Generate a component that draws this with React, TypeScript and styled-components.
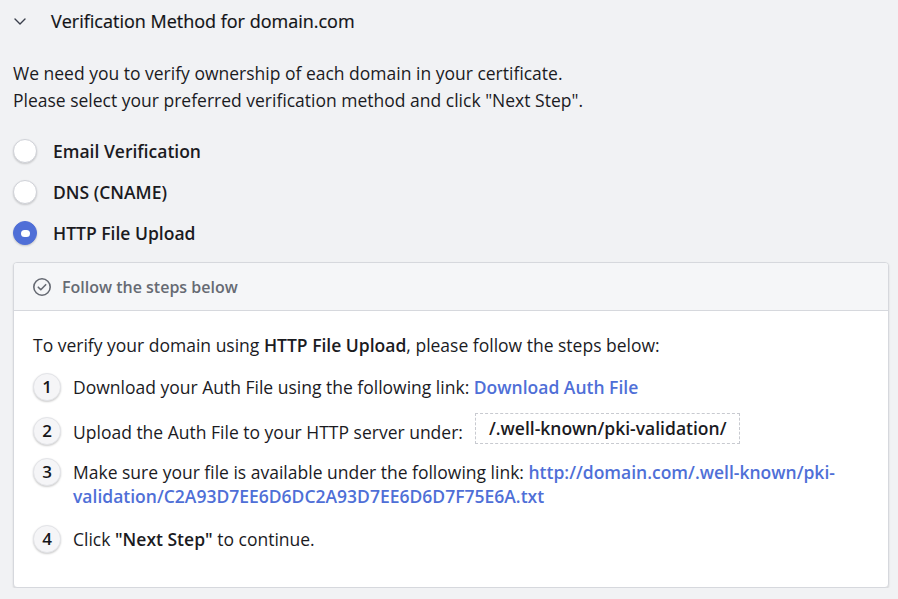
import React, { useState } from 'react';
import styled, { createGlobalStyle } from 'styled-components';

const GlobalStyle = createGlobalStyle`
  html, body {
    margin: 0;
    padding: 0;
    background: #f1f2f4;
  }
  body {
    font-family: 'Open Sans', 'Noto Sans', sans-serif;
    color: #1b1b1f;
  }
`;

const Page = styled.div`
  padding: 0 9px 0 13px;
`;

const Header = styled.div`
  display: flex;
  align-items: center;
  height: 42px;
  gap: 24px;
`;

const Chevron = styled.svg`
  width: 14px;
  height: 14px;
  color: #3a3f4b;
  flex-shrink: 0;
`;

const Title = styled.h2`
  margin: 0;
  font-size: 18px;
  font-weight: 500;
  color: #111216;
  -webkit-text-stroke: 0.2px #111216;
`;

const Intro = styled.p`
  margin: 18px 0 25px;
  font-size: 17.5px;
  line-height: 27px;
`;

const Options = styled.div`
  display: flex;
  flex-direction: column;
  gap: 17px;
  margin-bottom: 17px;
`;

const Option = styled.label`
  display: flex;
  align-items: center;
  gap: 16px;
  font-size: 17.5px;
  font-weight: 600;
  cursor: pointer;
  height: 24px;
`;

const RadioDot = styled.span<{ $checked: boolean }>`
  width: 24px;
  height: 24px;
  border-radius: 50%;
  box-sizing: border-box;
  flex-shrink: 0;
  display: flex;
  align-items: center;
  justify-content: center;
  background: ${({ $checked }) => ($checked ? '#4f6fd7' : '#fff')};
  border: 1px solid ${({ $checked }) => ($checked ? '#4f6fd7' : '#d0d2d8')};
  box-shadow: 0 1px 2px rgba(0, 0, 0, 0.18);

  &::after {
    content: '';
    display: ${({ $checked }) => ($checked ? 'block' : 'none')};
    width: 9px;
    height: 7px;
    border-radius: 4px;
    background: #fff;
  }
`;

const Panel = styled.div`
  background: #fff;
  border: 1px solid #d6d8dd;
  border-radius: 4px;
  box-shadow: 0 1px 2px rgba(0, 0, 0, 0.12);
  overflow: hidden;
`;

const PanelHead = styled.div`
  display: flex;
  align-items: center;
  gap: 10px;
  height: 47px;
  padding: 0 18px;
  background: #f5f6f8;
  border-bottom: 1px solid #d6d8dd;
  font-size: 16px;
  font-weight: 600;
  color: #666a73;
`;

const PanelBody = styled.div`
  padding: 21px 19px 34px;
  font-size: 17.5px;
`;

const Lead = styled.p`
  margin: 0 0 15px;
  line-height: 26px;

  b {
    font-weight: 600;
  }
`;

const Steps = styled.ol`
  list-style: none;
  margin: 0;
  padding: 0;
  display: flex;
  flex-direction: column;
`;

const Step = styled.li<{ $gap: number }>`
  display: flex;
  align-items: flex-start;
  gap: 12px;
  margin-bottom: ${({ $gap }) => $gap}px;
  line-height: 24px;

  b {
    font-weight: 600;
  }
`;

const StepNum = styled.span`
  width: 28px;
  height: 28px;
  border-radius: 50%;
  flex-shrink: 0;
  display: flex;
  align-items: center;
  justify-content: center;
  background: #f5f5f7;
  border: 1px solid #e3e4e8;
  box-sizing: border-box;
  box-shadow: 0 1px 2px rgba(0, 0, 0, 0.2);
  font-size: 17px;
  font-weight: 600;
  color: #15161a;
`;

const StepText = styled.span<{ $center?: boolean }>`
  padding-top: 2px;
  display: ${({ $center }) => ($center ? 'flex' : 'block')};
  align-items: center;
`;

const Link = styled.a`
  color: #4f6fd7;
  text-decoration: none;
  font-weight: 600;
`;

const CodeBox = styled.span`
  display: inline-block;
  margin-left: 12px;
  padding: 2px 13px 3px;
  border: 1px dashed #c8cad0;
  font-weight: 600;
  line-height: 24px;
  margin-top: -6px;
`;

const methods = ['Email Verification', 'DNS (CNAME)', 'HTTP File Upload'];

export default function App() {
  const [method, setMethod] = useState('HTTP File Upload');

  return (
    <>
      <GlobalStyle />
      <Page>
        <Header>
          <Chevron viewBox="0 0 14 14" fill="none">
            <path d="M2 5l5 5 5-5" stroke="currentColor" strokeWidth="1.4" strokeLinecap="round" strokeLinejoin="round" />
          </Chevron>
          <Title>Verification Method for domain.com</Title>
        </Header>

        <Intro>
          We need you to verify ownership of each domain in your certificate.
          <br />
          Please select your preferred verification method and click "Next Step".
        </Intro>

        <Options>
          {methods.map((m) => (
            <Option key={m} onClick={() => setMethod(m)}>
              <RadioDot $checked={method === m} />
              {m}
            </Option>
          ))}
        </Options>

        <Panel>
          <PanelHead>
            <svg width="20" height="20" viewBox="0 0 20 20" fill="none">
              <circle cx="10" cy="10" r="8.2" stroke="#666a73" strokeWidth="1.6" />
              <path d="M6.3 10.2l2.5 2.5 4.9-5" stroke="#666a73" strokeWidth="1.6" strokeLinecap="round" strokeLinejoin="round" />
            </svg>
            Follow the steps below
          </PanelHead>
          <PanelBody>
            <Lead>
              To verify your domain using <b>HTTP File Upload</b>, please follow the steps below:
            </Lead>
            <Steps>
              <Step $gap={16}>
                <StepNum>1</StepNum>
                <StepText>
                  Download your Auth File using the following link: <Link href="#">Download Auth File</Link>
                </StepText>
              </Step>
              <Step $gap={13}>
                <StepNum>2</StepNum>
                <StepText $center>
                  Upload the Auth File to your HTTP server under:
                  <CodeBox>/.well-known/pki-validation/</CodeBox>
                </StepText>
              </Step>
              <Step $gap={17}>
                <StepNum>3</StepNum>
                <StepText>
                  Make sure your file is available under the following link:{' '}
                  <Link href="#">
                    http://domain.com/.well-known/pki-validation/C2A93D7EE6D6DC2A93D7EE6D6D7F75E6A.txt
                  </Link>
                </StepText>
              </Step>
              <Step $gap={0}>
                <StepNum>4</StepNum>
                <StepText>
                  Click <b>"Next Step"</b> to continue.
                </StepText>
              </Step>
            </Steps>
          </PanelBody>
        </Panel>
      </Page>
    </>
  );
}
